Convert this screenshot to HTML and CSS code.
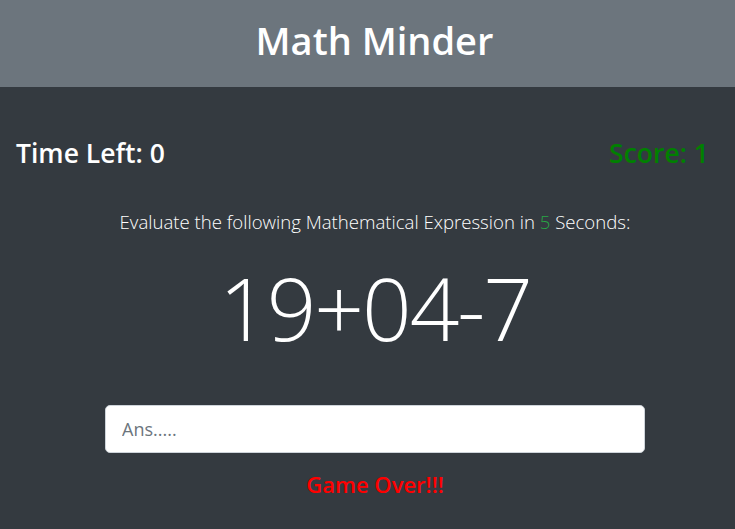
FILE: index.html
```html
<!DOCTYPE html>
<html>
<head>
<meta charset="utf-8">
<link rel="stylesheet" href="styles.css">
</head>
<body>
<header class="header">
  <h1 class="title">Math Minder</h1>
</header>
<main class="main">
  <div class="status">
    <h3 class="time">Time Left: 0</h3>
    <h3 class="score">Score: 1</h3>
  </div>
  <section class="game">
    <p class="lead">Evaluate the following Mathematical Expression in <span class="secs">5</span> Seconds:</p>
    <div class="expr">19+04-7</div>
    <div class="answer">
      <input class="input" type="text" placeholder="Ans.....">
    </div>
    <p class="over">Game Over!!!</p>
  </section>
</main>
</body>
</html>
```

FILE: styles.css
```css
html, body {
  margin: 0;
  padding: 0;
  height: 100%;
}
body {
  background: #343a40;
  font-family: "Open Sans", "Noto Sans", sans-serif;
  color: #fff;
}
.header {
  background: #6c757d;
  height: 87px;
  display: flex;
  align-items: center;
  justify-content: center;
  padding-left: 14px;
  box-sizing: border-box;
}
.title {
  margin: 0 0 8px;
  font-size: 38px;
  font-weight: 600;
  line-height: 1;
}
.main {
  padding: 0 26px 0 16px;
}
.status {
  display: flex;
  justify-content: space-between;
  align-items: center;
  height: 40px;
  margin-top: 46px;
}
.status h3 {
  margin: 0;
  font-size: 26.5px;
  font-weight: 600;
}
.score {
  color: #008000;
}
.game {
  padding-left: 25px;
}
.lead {
  margin: 34px 0 0;
  text-align: center;
  font-size: 18.6px;
  font-weight: 300;
  line-height: 30px;
}
.secs {
  color: #28a745;
}
.expr {
  text-align: center;
  font-size: 87px;
  font-weight: 300;
  letter-spacing: -2px;
  line-height: 1;
  margin-top: 27px;
}
.answer {
  display: flex;
  justify-content: center;
  margin-top: 54px;
}
.input {
  width: 540px;
  height: 48px;
  box-sizing: border-box;
  border: 1px solid #ced4da;
  border-radius: 5px;
  padding: 0 16px;
  font-family: inherit;
  font-size: 18px;
  color: #495057;
  background: #fff;
}
.input::placeholder {
  color: #6c757d;
}
.over {
  text-align: center;
  margin: 16px 0 0;
  color: #ff0000;
  font-size: 22px;
  font-weight: 600;
}
```
